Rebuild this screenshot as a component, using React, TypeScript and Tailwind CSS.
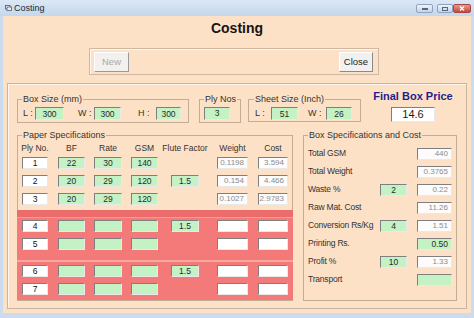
import React from 'react';

const sunken =
  'border border-t-[#7f7f7f] border-l-[#7f7f7f] border-r-[#e9e9e9] border-b-[#e9e9e9]';

const kinds = {
  green: 'bg-[#c4f2c4] text-[#2a2a2a] justify-center',
  greenR: 'bg-[#c4f2c4] text-[#2a2a2a] justify-end pr-[3px]',
  white: 'bg-white text-[#111] justify-center',
  out: 'bg-[#fcfcfc] text-[#8c8c8c] justify-end pr-[3px] text-[8px]',
};

type Kind = keyof typeof kinds;

function Cell({ className = '', kind, value = '' }: { className?: string; kind: Kind; value?: string }) {
  return (
    <div className={`flex items-center h-[12px] text-[8.5px] leading-none shrink-0 ${sunken} ${kinds[kind]} ${className}`}>
      {value}
    </div>
  );
}

function Group({
  className,
  legend,
  legendCls = 'ml-[4px]',
  children,
}: {
  className: string;
  legend: string;
  legendCls?: string;
  children: React.ReactNode;
}) {
  return (
    <fieldset className={`border border-[#c2ad97] shrink-0 ${className}`}>
      <legend className={`px-[1px] leading-[10px] text-[9px] text-[#333] ${legendCls}`}>{legend}</legend>
      {children}
    </fieldset>
  );
}

const cols = [
  'ml-[4px] w-[26px]',
  'ml-[10px] w-[27px]',
  'ml-[9px] w-[28px]',
  'ml-[9px] w-[27px]',
  'ml-[13px] w-[28px]',
  'ml-[18px] w-[31px]',
  'ml-[10px] w-[30px]',
];

const headers = ['Ply No.', 'BF', 'Rate', 'GSM', 'Flute Factor', 'Weight', 'Cost'];

const paperRows = [
  ['1', '22', '30', '140', '', '0.1198', '3.594'],
  ['2', '20', '29', '120', '1.5', '0.154', '4.466'],
  ['3', '20', '29', '120', '', '0.1027', '2.9783'],
];

function PaperRow({ row, flute }: { row: string[]; flute: boolean }) {
  return (
    <div className="flex">
      <Cell className={cols[0]} kind="white" value={row[0]} />
      <Cell className={cols[1]} kind="green" value={row[1]} />
      <Cell className={cols[2]} kind="green" value={row[2]} />
      <Cell className={cols[3]} kind="green" value={row[3]} />
      {flute ? (
        <Cell className={cols[4]} kind="green" value={row[4]} />
      ) : (
        <div className={`shrink-0 ${cols[4]}`} />
      )}
      <Cell className={cols[5]} kind={row[5] ? 'out' : 'white'} value={row[5]} />
      <Cell className={cols[6]} kind={row[6] ? 'out' : 'white'} value={row[6]} />
    </div>
  );
}

const specRows: { label: string; mid?: string; value: string; kind: Kind }[] = [
  { label: 'Total GSM', value: '440', kind: 'out' },
  { label: 'Total Weight', value: '0.3765', kind: 'out' },
  { label: 'Waste %', mid: '2', value: '0.22', kind: 'out' },
  { label: 'Raw Mat. Cost', value: '11.26', kind: 'out' },
  { label: 'Conversion Rs/Kg', mid: '4', value: '1.51', kind: 'out' },
  { label: 'Printing Rs.', value: '0.50', kind: 'greenR' },
  { label: 'Profit %', mid: '10', value: '1.33', kind: 'out' },
  { label: 'Transport', value: '', kind: 'green' },
];

function TitleBar() {
  return (
    <div className="h-[16px] shrink-0 flex items-start bg-linear-to-b from-[#dbe7f5] to-[#c3d7ec]">
      <svg className="mt-[5px] ml-[5px]" width="7" height="6" viewBox="0 0 7 6">
        <rect x="0.5" y="0.5" width="4.5" height="3.5" fill="#fff" stroke="#4a5a70" strokeWidth="0.8" />
        <rect x="2" y="2" width="4.5" height="3.5" fill="#e8eef6" stroke="#4a5a70" strokeWidth="0.8" />
      </svg>
      <span className="ml-[2px] mt-[3px] text-[9px] leading-[10px] text-[#1d2836]">Costing</span>
      <div className="ml-auto mr-[3px] mt-[4px] flex">
        <div className="w-[17px] h-[9px] rounded-[2px] border border-[#8da3bf] bg-linear-to-b from-[#eef3f9] to-[#c6d4e5] flex items-center justify-center">
          <div className="w-[6px] h-[2px] bg-[#59677a]" />
        </div>
        <div className="ml-[4px] w-[16px] h-[9px] rounded-[2px] border border-[#8da3bf] bg-linear-to-b from-[#eef3f9] to-[#c6d4e5] flex items-center justify-center">
          <div className="w-[6px] h-[4px] border border-[#59677a]" />
        </div>
        <div className="w-[18px] h-[9px] rounded-[2px] border border-[#a8473f] bg-linear-to-b from-[#e69a8e] to-[#c4453b] flex items-center justify-center">
          <svg width="6" height="5" viewBox="0 0 6 5">
            <path d="M1 0.5 L5 4.5 M5 0.5 L1 4.5" stroke="#fff" strokeWidth="1.3" />
          </svg>
        </div>
      </div>
    </div>
  );
}

export default function App() {
  return (
    <div className="w-[474px] h-[318px] overflow-hidden flex flex-col bg-[#cbdcef] font-['Liberation_Sans',Arial,sans-serif] text-[9px] text-[#333]">
      <TitleBar />
      <div className="mx-[3px] h-[297px] bg-[#fde1c6] flex flex-col">
        <div className="mt-[4px] h-[16px] text-center text-[14px] font-bold leading-[16px] text-[#151515]">
          Costing
        </div>

        <div className="mt-[12px] ml-[86px] w-[290px] h-[27px] shrink-0 border border-[#cdb9a3] shadow-[inset_1px_1px_0_#fff7ee] flex items-start justify-between pt-[3px] pl-[4px] pr-[5px]">
          <button className="w-[35px] h-[20px] bg-[#f3f1ef] border border-t-[#fff] border-l-[#fff] border-r-[#9a9a9a] border-b-[#9a9a9a] text-[9.5px] text-[#a8a8a8]">
            New
          </button>
          <button className="w-[34px] h-[20px] bg-[#f3f1ef] border border-t-[#fff] border-l-[#fff] border-r-[#8a8a8a] border-b-[#8a8a8a] text-[9.5px] text-[#222]">
            Close
          </button>
        </div>

        <div className="mt-[8px] ml-[4px] w-[460px] h-[226px] shrink-0 border border-[#c9b49e] shadow-[inset_1px_1px_0_#fff5ea] flex flex-col">
          <div className="mt-[10px] flex items-start">
            <Group className="ml-[9px] w-[172px] h-[29px]" legend="Box Size (mm)">
              <div className="flex items-center pt-[3px] pl-[5px]">
                <span className="w-[12px] shrink-0">L :</span>
                <Cell className="w-[29px] h-[13px]" kind="green" value="300" />
                <span className="ml-[14px] w-[16px] shrink-0">W :</span>
                <Cell className="w-[27px] h-[13px]" kind="green" value="300" />
                <span className="ml-[17px] w-[18px] shrink-0">H :</span>
                <Cell className="w-[25px] h-[13px]" kind="green" value="300" />
              </div>
            </Group>
            <Group className="ml-[10px] w-[42px] h-[29px]" legend="Ply Nos">
              <div className="flex items-center pt-[3px] pl-[4px]">
                <Cell className="w-[26px] h-[13px]" kind="green" value="3" />
              </div>
            </Group>
            <Group className="ml-[7px] w-[113px] h-[28px]" legend="Sheet Size (Inch)" legendCls="ml-[5px]">
              <div className="flex items-center pt-[3px] pl-[6px]">
                <span className="w-[16px] shrink-0">L :</span>
                <Cell className="w-[27px] h-[13px]" kind="green" value="51" />
                <span className="ml-[10px] w-[18px] shrink-0">W :</span>
                <Cell className="w-[26px] h-[13px]" kind="green" value="26" />
              </div>
            </Group>
            <div className="ml-[12px] -mt-[4px] w-[80px] flex flex-col items-center">
              <div className="text-[11px] font-bold leading-[12px] text-[#1f1f8e] whitespace-nowrap">
                Final Box Price
              </div>
              <div className={`mt-[5px] w-[44px] h-[15px] bg-white flex items-center justify-center text-[11px] text-[#1a1a1a] ${sunken}`}>
                14.6
              </div>
            </div>
          </div>

          <div className="mt-[7px] flex items-start">
            <Group className="ml-[9px] w-[276px] h-[171px]" legend="Paper Specifications">
              <div className="mt-[3px] flex leading-[10px] text-[8.5px] text-[#333]">
                {headers.map((h, i) => (
                  <div key={h} className={`shrink-0 flex justify-center whitespace-nowrap ${cols[i]}`}>
                    {h}
                  </div>
                ))}
              </div>
              <div className="mt-[4px] flex flex-col gap-[6px]">
                {paperRows.map((r) => (
                  <PaperRow key={r[0]} row={r} flute={r[4] !== ''} />
                ))}
              </div>
              <div className="mt-[5px] -mx-[1px] flex flex-col">
                <div className="h-[50px] bg-[#f47a7a] flex flex-col">
                  <div className="h-[7px] bg-[#ec6b6b]" />
                  <div className="h-[1px] bg-[#f79c94]" />
                  <div className="mt-[2px] pl-[1px] flex flex-col gap-[6px]">
                    <PaperRow row={['4', '', '', '', '1.5', '', '']} flute />
                    <PaperRow row={['5', '', '', '', '', '', '']} flute={false} />
                  </div>
                </div>
                <div className="h-[2px] bg-[#f8a79e]" />
                <div className="h-[38px] bg-[#f47a7a] pt-[3px] pl-[1px] flex flex-col gap-[6px]">
                  <PaperRow row={['6', '', '', '', '1.5', '', '']} flute />
                  <PaperRow row={['7', '', '', '', '', '', '']} flute={false} />
                </div>
              </div>
            </Group>

            <Group className="ml-[10px] w-[154px] h-[171px]" legend="Box Specifications and Cost">
              <div className="pt-[8px] pl-[4px] flex flex-col gap-[6px]">
                {specRows.map((r) => (
                  <div key={r.label} className="flex items-start h-[12px]">
                    <span className="w-[72px] shrink-0 leading-[10px] text-[8.5px] tracking-[-0.2px] whitespace-nowrap">
                      {r.label}
                    </span>
                    {r.mid ? (
                      <Cell className="w-[27px]" kind="green" value={r.mid} />
                    ) : (
                      <div className="w-[27px] shrink-0" />
                    )}
                    <Cell className="ml-[10px] w-[35px]" kind={r.kind} value={r.value} />
                  </div>
                ))}
              </div>
            </Group>
          </div>
        </div>
      </div>
    </div>
  );
}
